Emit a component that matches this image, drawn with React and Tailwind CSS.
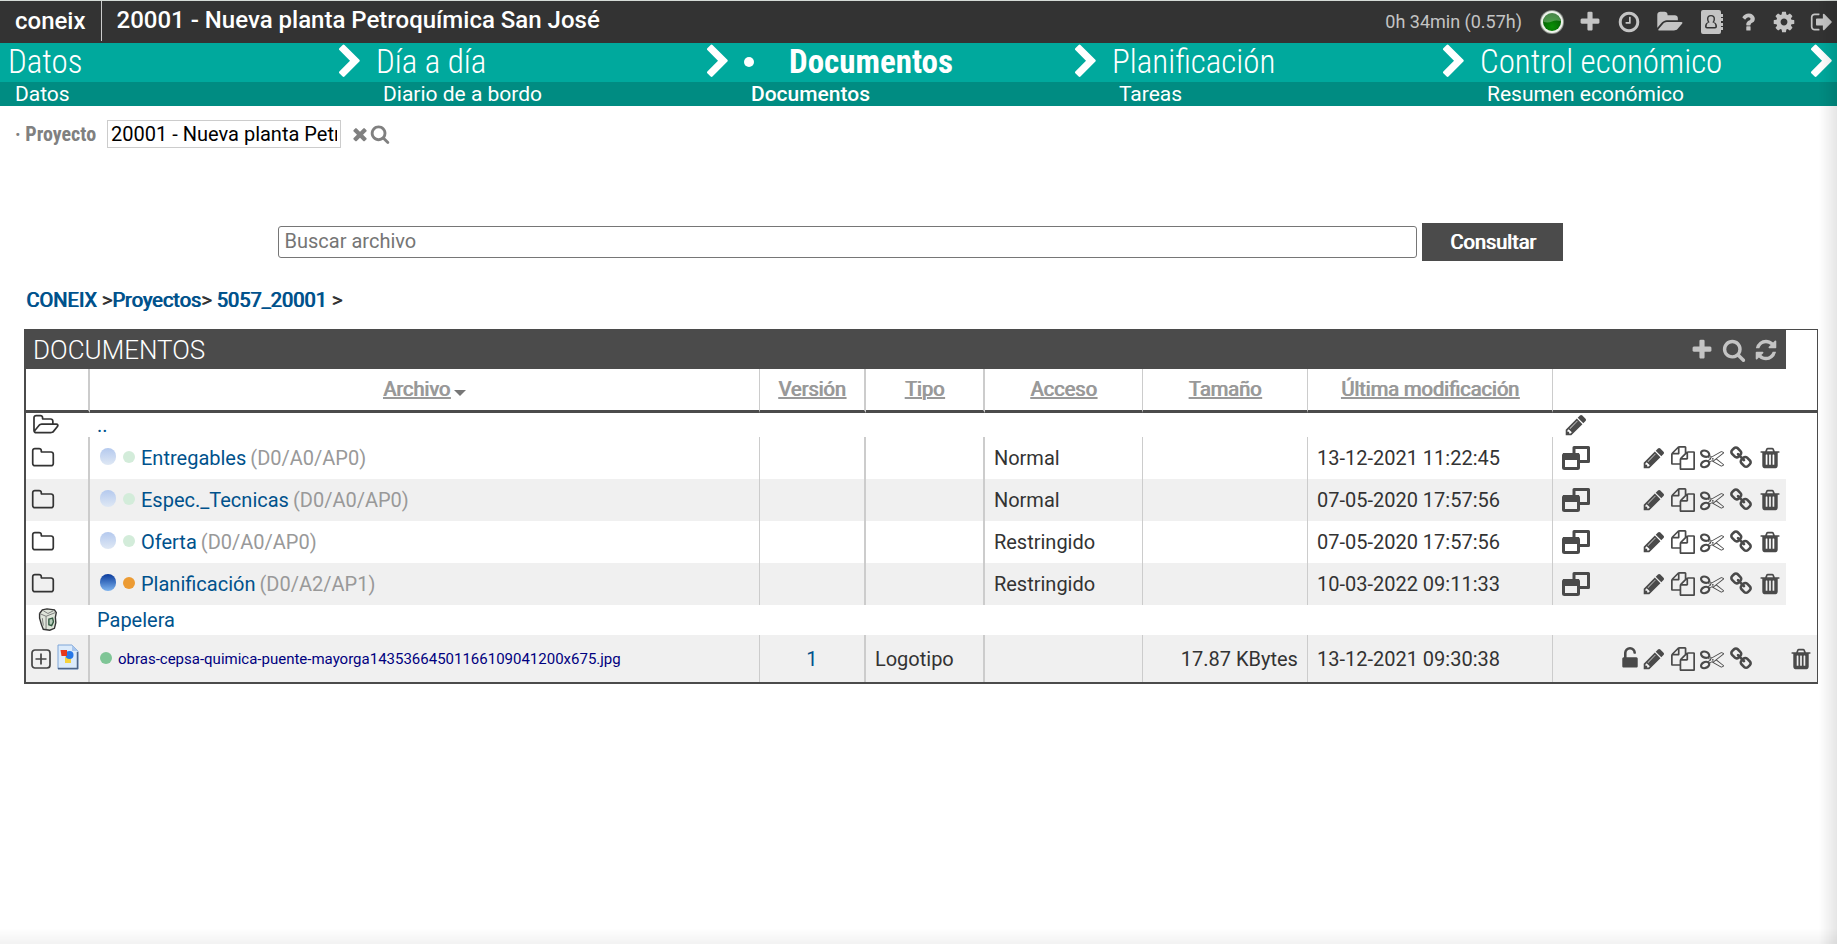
import React from 'react';

const paths = {
    plus: 'M1600 736v192q0 40-28 68t-68 28h-416v416q0 40-28 68t-68 28h-192q-40 0-68-28t-28-68v-416h-416q-40 0-68-28t-28-68v-192q0-40 28-68t68-28h416v-416q0-40 28-68t68-28h192q40 0 68 28t28 68v416h416q40 0 68 28t28 68z',
    search: 'M1216 832q0-185-131.5-316.5t-316.5-131.5-316.5 131.5-131.5 316.5 131.5 316.5 316.5 131.5 316.5-131.5 131.5-316.5zm512 832q0 52-38 90t-90 38q-54 0-90-38l-343-342q-179 124-399 124-143 0-273.5-55.5t-225-150-150-225-55.5-273.5 55.5-273.5 150-225 225-150 273.5-55.5 273.5 55.5 225 150 150 225 55.5 273.5q0 220-124 399l343 343q37 37 37 90z',
    refresh: 'M1639 1056q0 5-1 7-64 268-268 434.5t-478 166.5q-146 0-282.5-55t-243.5-157l-129 129q-19 19-45 19t-45-19-19-45v-448q0-26 19-45t45-19h448q26 0 45 19t19 45-19 45l-137 137q71 66 161 102t187 36q134 0 250-65t186-179q11-17 53-117 8-23 30-23h192q13 0 22.5 9.5t9.5 22.5zm25-800v448q0 26-19 45t-45 19h-448q-26 0-45-19t-19-45 19-45l138-138q-148-137-349-137-134 0-250 65t-186 179q-11 17-53 117-8 23-30 23h-199q-13 0-22.5-9.5t-9.5-22.5v-7q65-268 270-434.5t480-166.5q146 0 284 55.5t245 156.5l130-129q19-19 45-19t45 19 19 45z',
    times: 'M1490 1322q0 40-28 68l-136 136q-28 28-68 28t-68-28l-294-294-294 294q-28 28-68 28t-68-28l-136-136q-28-28-28-68t28-68l294-294-294-294q-28-28-28-68t28-68l136-136q28-28 68-28t68 28l294 294 294-294q28-28 68-28t68 28l136 136q28 28 28 68t-28 68l-294 294 294 294q28 28 28 68z',
    clock: 'M1024 544v448q0 14-9 23t-23 9h-320q-14 0-23-9t-9-23v-64q0-14 9-23t23-9h224v-352q0-14 9-23t23-9h64q14 0 23 9t9 23zm416 352q0-148-73-273t-198-198-273-73-273 73-198 198-73 273 73 273 198 198 273 73 273-73 198-198 73-273zm224 0q0 209-103 385.5t-279.5 279.5-385.5 103-385.5-103-279.5-279.5-103-385.5 103-385.5 279.5-279.5 385.5-103 385.5 103 279.5 279.5 103 385.5z',
    folderOpen: 'M1879 952q0 31-31 66l-336 396q-43 51-120.5 86.5t-143.5 35.5h-1088q-34 0-60.5-13t-26.5-43q0-31 31-66l336-396q43-51 120.5-86.5t143.5-35.5h1088q34 0 60.5 13t26.5 43zm-343-344v160h-832q-94 0-197 47.5t-164 119.5l-337 396-5 6q0-4-.5-12.5t-.5-12.5v-960q0-92 66-158t158-66h320q92 0 158 66t66 158v32h544q92 0 158 66t66 158z',
    folderOpenLine: 'M1845 931q0-35-53-35h-1088q-40 0-85.5 21.5t-71.5 52.5l-294 363q-18 24-18 40 0 35 53 35h1088q40 0 86-22t71-53l294-363q18-22 18-39zm-1141-163h768v-160q0-40-28-68t-68-28h-576q-40 0-68-28t-28-68v-64q0-40-28-68t-68-28h-320q-40 0-68 28t-28 68v853l256-315q44-53 116-87.5t140-34.5zm1269 163q0 62-46 120l-295 363q-43 53-116 87.5t-140 34.5h-1088q-92 0-158-66t-66-158v-960q0-92 66-158t158-66h320q92 0 158 66t66 158v32h544q92 0 158 66t66 158v160h192q54 0 99 24.5t67 70.5q15 32 15 68z',
    folderLine: 'M1600 1312v-704q0-40-28-68t-68-28h-704q-40 0-68-28t-28-68v-64q0-40-28-68t-68-28h-320q-40 0-68 28t-28 68v960q0 40 28 68t68 28h1216q40 0 68-28t28-68zm128-704v704q0 92-66 158t-158 66h-1216q-92 0-158-66t-66-158v-960q0-92 66-158t158-66h320q92 0 158 66t66 158v32h672q92 0 158 66t66 158z',
    question: 'M1088 1256v240q0 16-12 28t-28 12h-240q-16 0-28-12t-12-28v-240q0-16 12-28t28-12h240q16 0 28 12t12 28zm316-600q0 54-15.5 101t-35 76.5-55 59.5-57.5 43.5-61 35.5q-41 23-68.5 65t-27.5 67q0 17-12 32.5t-28 15.5h-240q-15 0-25.5-18.5t-10.5-37.5v-45q0-83 65-156.5t143-108.5q59-27 84-56t25-76q0-42-46.5-74t-107.5-32q-65 0-108 29-35 25-107 115-13 16-31 16-12 0-25-8l-164-125q-13-10-15.5-25t5.5-28q160-266 464-266 80 0 161 31t146 83 106 127.5 41 158.5z',
    cog: 'M1152 896q0-106-75-181t-181-75-181 75-75 181 75 181 181 75 181-75 75-181zm512-109v222q0 12-8 23t-20 13l-185 28q-19 54-39 91 35 50 107 138 10 12 10 25t-9 23q-27 37-99 108t-94 71q-12 0-26-9l-138-108q-44 23-91 38-16 136-29 186-7 28-36 28h-222q-14 0-24.5-8.5t-11.5-21.5l-28-184q-49-16-90-37l-141 107q-10 9-25 9-14 0-25-11-126-114-165-168-7-10-7-23 0-12 8-23 15-21 51-66.5t54-70.5q-27-50-41-99l-183-27q-13-2-21-12.5t-8-23.5v-222q0-12 8-23t19-13l186-28q14-46 39-92-40-57-107-138-10-12-10-24 0-10 9-23 26-36 98.5-107.5t94.5-71.5q13 0 26 10l138 107q44-23 91-38 16-136 29-186 7-28 36-28h222q14 0 24.5 8.5t11.5 21.5l28 184q49 16 90 37l142-107q9-9 24-9 13 0 25 10 129 119 165 170 7 8 7 22 0 12-8 23-15 21-51 66.5t-54 70.5q26 50 41 98l183 28q13 2 21 12.5t8 23.5z',
    signOut: 'M704 1440q0 4 1 20t.5 26.5-3 23.5-10 19.5-20.5 6.5h-320q-119 0-203.5-84.5t-84.5-203.5v-704q0-119 84.5-203.5t203.5-84.5h320q13 0 22.5 9.5t9.5 22.5q0 4 1 20t.5 26.5-3 23.5-10 19.5-20.5 6.5h-320q-66 0-113 47t-47 113v704q0 66 47 113t113 47h312l11.5 1 11.5 3 8 5.5 7 9 2 13.5zm928-544q0 26-19 45l-544 544q-19 19-45 19t-45-19-19-45v-288h-448q-26 0-45-19t-19-45v-384q0-26 19-45t45-19h448v-288q0-26 19-45t45-19 45 19l544 544q19 19 19 45z',
    pencil: 'M491 1536l91-91-235-235-91 91v107h128v128h107zm523-928q0-22-22-22-10 0-17 7l-542 542q-7 7-7 17 0 22 22 22 10 0 17-7l542-542q7-7 7-17zm-54-192l416 416-832 832h-416v-416zm683 96q0 53-37 90l-166 166-416-416 166-165q36-38 90-38 53 0 91 38l235 234q37 39 37 91z',
    files: 'M1696 384q40 0 68 28t28 68v1216q0 40-28 68t-68 28h-960q-40 0-68-28t-28-68v-288h-544q-40 0-68-28t-28-68v-672q0-40 20-88t48-76l408-408q28-28 76-48t88-20h416q40 0 68 28t28 68v328q68-40 128-40h416zm-544 213l-299 299h299v-299zm-640-384l-299 299h299v-299zm196 647l316-316v-416h-384v416q0 40-28 68t-68 28h-416v640h512v-256q0-40 20-88t48-76zm956 804v-1152h-384v416q0 40-28 68t-68 28h-416v640h896z',
    cut: 'M960 896q26 0 45 19t19 45-19 45-45 19-45-19-19-45 19-45 45-19zm300 64l507 398q28 20 25 56-5 35-35 51l-128 64q-13 7-29 7-17 0-31-8l-690-387-110 66q-8 4-12 5 14 49 10 97-7 77-56 147.5t-132 123.5q-132 84-277 84-136 0-222-78-90-84-79-207 7-76 56-147t131-124q132-84 278-84 83 0 151 31 9-13 22-22l122-73-122-73q-13-9-22-22-68 31-151 31-146 0-278-84-82-53-131-124t-56-147q-5-59 15.5-113t63.5-93q85-79 222-79 145 0 277 84 83 52 132 123t56 148q4 48-10 97 4 1 12 5l110 66 690-387q14-8 31-8 16 0 29 7l128 64q30 16 35 51 3 36-25 56zm-681-260q46-42 21-108t-106-117q-92-59-192-59-74 0-113 36-46 42-21 108t106 117q92 59 192 59 74 0 113-36zm-85 745q81-51 106-117t-21-108q-39-36-113-36-100 0-192 59-81 51-106 117t21 108q39 36 113 36 100 0 192-59zm178-613l96 58v-11q0-36 33-56l14-8-79-44-26 26q-3 3-10 11t-12 12q-2 2-4 3.5t-3 2.5zm224 224l96 32 736-576-128-64-768 431v113l-160 96 9 8q2 2 7 6 4 4 11 12t11 12l26 26zm704 416l128-64-520-408-177 138q-2 3-13 7z',
    link: 'M1520 1216q0-40-28-68l-208-208q-28-28-68-28-42 0-72 32 3 3 19 18.5t21.5 21.5 15 19 13 25.5 3.5 27.5q0 40-28 68t-68 28q-15 0-27.5-3.5t-25.5-13-19-15-21.5-21.5-18.5-19q-33 31-33 73 0 40 28 68l206 207q27 27 68 27 40 0 68-26l147-146q28-28 28-67zm-703-705q0-40-28-68l-206-207q-28-28-68-28-39 0-68 27l-147 146q-28 28-28 67 0 40 28 68l208 208q27 27 68 27 42 0 72-31-3-3-19-18.5t-21.5-21.5-15-19-13-25.5-3.5-27.5q0-40 28-68t68-28q15 0 27.5 3.5t25.5 13 19 15 21.5 21.5 18.5 19q33-31 33-73zm895 705q0 120-85 203l-147 146q-83 83-203 83-121 0-204-85l-206-207q-83-83-83-203 0-123 88-209l-88-88q-86 88-208 88-120 0-204-84l-208-208q-84-84-84-204t85-203l147-146q83-83 203-83 121 0 204 85l206 207q83 83 83 203 0 123-88 209l88 88q86-88 208-88 120 0 204 84l208 208q84 84 84 204z',
    trash: 'M704 1376v-704q0-14-9-23t-23-9h-64q-14 0-23 9t-9 23v704q0 14 9 23t23 9h64q14 0 23-9t9-23zm256 0v-704q0-14-9-23t-23-9h-64q-14 0-23 9t-9 23v704q0 14 9 23t23 9h64q14 0 23-9t9-23zm256 0v-704q0-14-9-23t-23-9h-64q-14 0-23 9t-9 23v704q0 14 9 23t23 9h64q14 0 23-9t9-23zm-544-992h448l-48-117q-7-9-17-11h-317q-10 2-17 11zm928 32v64q0 14-9 23t-23 9h-96v948q0 83-47 143.5t-113 60.5h-832q-66 0-113-58.5t-47-141.5v-952h-96q-14 0-23-9t-9-23v-64q0-14 9-23t23-9h309l70-167q15-37 54-63t79-26h320q40 0 79 26t54 63l70 167h309q14 0 23 9t9 23z',
    unlock: 'M1376 768q40 0 68 28t28 68v576q0 40-28 68t-68 28h-960q-40 0-68-28t-28-68v-576q0-40 28-68t68-28h32v-320q0-185 131.5-316.5t316.5-131.5 316.5 131.5 131.5 316.5q0 26-19 45t-45 19h-64q-26 0-45-19t-19-45q0-106-75-181t-181-75-181 75-75 181v320h736z',
    chevron: 'M1363 877l-742 742q-19 19-45 19t-45-19l-166-166q-19-19-19-45t19-45l531-531-531-531q-19-19-19-45t19-45l166-166q19-19 45-19t45 19l742 742q19 19 19 45t-19 45z',
};

const Icon = ({ name, className = 'size-6', wide = false }) => (
    <svg viewBox={wide ? '0 0 2048 1792' : '0 0 1792 1792'} className={`shrink-0 ${className}`} fill="currentColor" aria-hidden="true">
        <path d={paths[name]} />
    </svg>
);

const IconButton = ({ label, children, className = '' }) => (
    <button type="button" aria-label={label} className={`flex shrink-0 cursor-pointer items-center ${className}`}>
        {children}
    </button>
);

const Led = () => (
    <svg viewBox="0 0 24 26" className="h-[26px] w-6" aria-hidden="true">
        <defs>
            <radialGradient id="led" cx="50%" cy="75%" r="70%">
                <stop offset="0" stopColor="#0a8f06" />
                <stop offset="1" stopColor="#045a04" />
            </radialGradient>
        </defs>
        <circle cx="12" cy="13" r="12" fill="#8d928b" />
        <circle cx="12" cy="13" r="11" fill="#edf2ea" />
        <circle cx="12" cy="13" r="9" fill="url(#led)" />
        <path d="M3.500 13a8.500 8.500 0 0 1 17-1q-5-1-8.500.5T3.500 13z" fill="#fff" opacity=".28" />
    </svg>
);

const AddressBook = () => (
    <svg viewBox="0 0 24 28" className="h-7 w-6" fill="currentColor" aria-hidden="true">
        <path fillRule="evenodd" d="M3 2h16a2 2 0 0 1 2 2v20a2 2 0 0 1-2 2H3a2 2 0 0 1-2-2V4a2 2 0 0 1 2-2zm8 5a4 4 0 0 0-4 4q0 2 1 3.300-3 .7-3 4.200 0 2 2 2h8q2 0 2-2 0-3.500-3-4.200 1-1.300 1-3.300a4 4 0 0 0-4-4z" />
        <path d="M11 8.300a2.600 2.600 0 0 1 2.600 2.700q0 2.200-1.300 3.200 3 .5 3 3.500v1.200H6.700v-1.200q0-3 3-3.500Q8.400 13.200 8.400 11A2.600 2.600 0 0 1 11 8.300z" />
        <path d="M21 6h2v3h-2zM21 10h2v3h-2zM21 15h2v3h-2zM21 19h2v3h-2z" />
    </svg>
);

const WindowRestore = () => (
    <svg viewBox="0 0 28 24" className="h-6 w-7" fill="none" stroke="currentColor" aria-hidden="true">
        <path d="M12 7.500v-6h14.500v14H18" strokeWidth="3" strokeLinejoin="round" />
        <rect x="1.500" y="8.500" width="15" height="14" rx="1" strokeWidth="3" />
        <path d="M1 10.500h16" strokeWidth="7" />
    </svg>
);

const Recycle = () => (
    <svg viewBox="0 0 24 28" className="h-[26px] w-6" aria-hidden="true">
        <path d="M4 7l3-4 5-1 8 1 2 3-1 5 .5 6-1.500 6-5 2-7-1-2-5-2-7z" fill="#dfe5da" stroke="#333" strokeWidth="1.500" />
        <path d="M4 7l7 3 10-4M11 10v14M8 4l5 3 6-3M7 12l1 8" fill="none" stroke="#777" />
        <path d="M14 13l4-1 1 4-2 4-3-1z" fill="#b7cdbb" stroke="#345b42" strokeWidth="1.500" />
    </svg>
);

const PictureFile = () => (
    <svg viewBox="0 0 22 26" className="h-[26px] w-[22px]" aria-hidden="true">
        <path d="M1 1h14l6 6v18H1z" fill="#dcebfb" stroke="#7fa6d8" />
        <path d="M20.500 8v16.500H1" fill="none" stroke="#4f6688" strokeWidth="1.500" />
        <path d="M15 1l6 6h-6z" fill="#a9c6ec" />
        <path d="M8 13l6 1v5H8z" fill="#f6d23c" />
        <circle cx="12.500" cy="11" r="4" fill="#2677e8" />
        <path d="M3.500 6H10v6H4.500z" fill="#e8361a" />
    </svg>
);

const menu = [
    { title: 'Datos', sub: 'Datos' },
    { title: 'Día a día', sub: 'Diario de a bordo' },
    { title: 'Documentos', sub: 'Documentos', active: true },
    { title: 'Planificación', sub: 'Tareas' },
    { title: 'Control económico', sub: 'Resumen económico' },
];

const columns = [
    { title: 'Versión', border: 'border-r-2' },
    { title: 'Tipo', border: 'border-r-2' },
    { title: 'Acceso', border: 'border-r' },
    { title: 'Tamaño', border: 'border-r' },
    { title: 'Última modificación', border: 'border-r' },
];

const folders = [
    { name: 'Entregables', info: '(D0/A0/AP0)', access: 'Normal', date: '13-12-2021 11:22:45' },
    { name: 'Espec._Tecnicas', info: '(D0/A0/AP0)', access: 'Normal', date: '07-05-2020 17:57:56' },
    { name: 'Oferta', info: '(D0/A0/AP0)', access: 'Restringido', date: '07-05-2020 17:57:56' },
    { name: 'Planificación', info: '(D0/A2/AP1)', access: 'Restringido', date: '10-03-2022 09:11:33', pending: true },
];

// regular weight thickened by one pixel
const heavy = '[text-shadow:1px_0_currentColor]';

const Header = () => (
    <header className="flex h-[43px] items-center border-t border-[#d5dbd7] bg-[#333] pr-[3px] text-white">
        <a href="#inicio" className="flex h-10 items-center self-start border-r border-[#ccc] pr-[15px] pl-[15px] text-[24px] leading-10 font-medium">coneix</a>
        <h1 className="self-start pl-[15px] text-[24px] leading-[38px] font-medium">20001 - Nueva planta Petroquímica San José</h1>
        <div className="ml-auto flex items-center text-[#c4c4c4]">
            <span className="mr-[18px] pb-[2px] text-[18px]">0h 34min (0.57h)</span>
            <IconButton label="Estado" className="mr-[14px]"><Led /></IconButton>
            <IconButton label="Añadir" className="mr-[15px]"><Icon name="plus" /></IconButton>
            <IconButton label="Horas" className="mr-4"><Icon name="clock" /></IconButton>
            <IconButton label="Carpetas" className="mr-[15px]"><Icon name="folderOpen" className="h-6 w-7" wide /></IconButton>
            <IconButton label="Contactos" className="mr-3"><AddressBook /></IconButton>
            <IconButton label="Ayuda" className="mr-3"><Icon name="question" /></IconButton>
            <IconButton label="Ajustes" className="mr-[14px]"><Icon name="cog" /></IconButton>
            <IconButton label="Salir"><Icon name="signOut" /></IconButton>
        </div>
    </header>
);

const Menu = () => (
    <nav className="-mr-[3px] grid grid-cols-5 font-['Roboto_Condensed',Roboto,sans-serif] text-white">
        {menu.map(item => (
            <div key={item.title} className="min-w-0">
                <div className="flex h-[39px] items-center justify-between bg-[#00a99d] pb-[2px] pl-2">
                    <a href="#menu" className={item.active ? 'flex items-center text-[33px] leading-9 font-bold' : 'text-[33px] leading-9 font-light'}>
                        {item.active && <span className="mr-[35px] size-[10px] rounded-full bg-white" />}
                        {item.title}
                    </a>
                    <Icon name="chevron" className="size-9" />
                </div>
                <div className="h-6 bg-[#008c82] pl-[15px] font-[Roboto,sans-serif] text-[21px] leading-6">
                    <a href="#submenu" className={item.active ? 'font-medium' : ''}>{item.sub}</a>
                </div>
            </div>
        ))}
    </nav>
);

const RowActions = () => (
    <>
        <IconButton label="Editar"><Icon name="pencil" /></IconButton>
        <IconButton label="Copiar"><Icon name="files" /></IconButton>
        <IconButton label="Cortar"><Icon name="cut" /></IconButton>
        <IconButton label="Enlace"><Icon name="link" /></IconButton>
    </>
);

const FolderRow = ({ folder, shaded }) => {
    const shade = shaded ? 'bg-[#f0f0f0]' : '';
    const cell = `border-r border-[#ccc] px-[9px] ${shade}`;
    return (
        <tr className="h-[42px]">
            <td className={`border-r-2 border-[#ccc] pl-[5px] ${shade}`}>
                <Icon name="folderLine" />
            </td>
            <td className={`border-r border-[#ccc] px-[10px] ${shade}`}>
                <div className="flex items-center">
                    <span className={`mr-[7px] mb-1 h-[17px] w-4 rounded-full bg-linear-to-b ${folder.pending ? 'from-[#0a3a9c] to-[#7fb4ee]' : 'from-[#b4c9ee] to-[#dfe8f4]'}`} />
                    <span className={`mr-[6px] mb-[2px] size-3 rounded-full ${folder.pending ? 'bg-[#ec9b33]' : 'bg-[#d3ecda]'}`} />
                    <a href="#carpeta" className="mr-1 text-[#00528c]">{folder.name}</a>
                    <span className="text-[#999]">{folder.info}</span>
                </div>
            </td>
            <td className={`border-r-2 border-[#ccc] ${shade}`} />
            <td className={`border-r-2 border-[#ccc] ${shade}`} />
            <td className={cell}>{folder.access}</td>
            <td className={cell} />
            <td className={cell}>{folder.date}</td>
            <td className={`pr-1 pl-[9px] text-[#4a4a4a] ${shade}`}>
                <div className="flex items-center gap-[5px]">
                    <IconButton label="Abrir ventana" className="mr-auto"><WindowRestore /></IconButton>
                    <RowActions />
                    <IconButton label="Eliminar"><Icon name="trash" /></IconButton>
                </div>
            </td>
            <td />
        </tr>
    );
};

const DocumentsTable = () => (
    <table className="w-full table-fixed border-separate border-spacing-0 border-t border-r border-b-2 border-l-2 border-[#4b4b4b] text-left text-[20px] leading-6 text-[#333]">
        <colgroup>
            <col className="w-16" />
            <col />
            <col className="w-[106px]" />
            <col className="w-[119px]" />
            <col className="w-[158px]" />
            <col className="w-[165px]" />
            <col className="w-[245px]" />
            <col className="w-[233px]" />
            <col className="w-[31px]" />
        </colgroup>
        <thead>
            <tr className="h-[39px] bg-[#4b4b4b]">
                <th colSpan={8} className="pr-2 pl-[7px] font-light text-white">
                    <div className="flex items-center">
                        <h2 className="mr-auto text-[26px] leading-8">DOCUMENTOS</h2>
                        <div className="flex gap-2 text-[#c4c4c4]">
                            <IconButton label="Nuevo documento"><Icon name="plus" /></IconButton>
                            <IconButton label="Buscar"><Icon name="search" /></IconButton>
                            <IconButton label="Actualizar"><Icon name="refresh" /></IconButton>
                        </div>
                    </div>
                </th>
                <td className="bg-white" />
            </tr>
            <tr className="h-11 text-[#999]">
                <td className="border-r-2 border-b-3 border-r-[#ccc] border-b-[#4b4b4b]" />
                <th className={`border-r border-b-3 border-r-[#ccc] border-b-[#4b4b4b] pb-[2px] text-center font-normal ${heavy}`}>
                    <a href="#orden" className="underline">Archivo</a>
                    <span className="ml-1 inline-block border-x-6 border-t-6 border-x-transparent border-t-[#777]" />
                </th>
                {columns.map(column => (
                    <th key={column.title} className={`${column.border} border-b-3 border-r-[#ccc] border-b-[#4b4b4b] pb-[2px] text-center font-normal ${heavy}`}>
                        <a href="#orden" className="underline">{column.title}</a>
                    </th>
                ))}
                <td colSpan={2} className="border-b-3 border-b-[#4b4b4b]" />
            </tr>
        </thead>
        <tbody>
            <tr className="h-6">
                <td className="pl-[6px]"><Icon name="folderOpenLine" className="h-6 w-7" wide /></td>
                <td colSpan={6} className="pl-[7px]"><a href="#subir" className="text-[#00528c]">..</a></td>
                <td colSpan={2} className="pl-[11px] text-[#4a4a4a]">
                    <IconButton label="Editar carpeta"><Icon name="pencil" /></IconButton>
                </td>
            </tr>
            {folders.map((folder, index) => (
                <FolderRow key={folder.name} folder={folder} shaded={index % 2 === 1} />
            ))}
            <tr className="h-[30px]">
                <td className="pl-[9px]"><Recycle /></td>
                <td colSpan={8} className="pl-[7px]"><a href="#papelera" className="text-[#00528c]">Papelera</a></td>
            </tr>
            <tr className="h-[47px] bg-[#f0f0f0]">
                <td className="border-r-2 border-[#ccc] pl-[5px]">
                    <div className="flex items-center gap-[6px]">
                        <IconButton label="Desplegar">
                            <svg viewBox="0 0 20 20" className="size-5" fill="none" stroke="#444" strokeWidth="1.700" aria-hidden="true">
                                <rect x="1" y="1" width="18" height="18" rx="3" />
                                <path d="M4.500 10h11M10 4.500v11" />
                            </svg>
                        </IconButton>
                        <div className="pb-1"><PictureFile /></div>
                    </div>
                </td>
                <td className="border-r border-[#ccc] px-[10px]">
                    <div className="flex items-center">
                        <span className="mr-[6px] mb-[2px] size-3 rounded-full bg-[#7fc596]" />
                        <a href="#archivo" className="text-[15px] text-[#00007f]">obras-cepsa-quimica-puente-mayorga14353664501166109041200x675.jpg</a>
                    </div>
                </td>
                <td className="border-r-2 border-[#ccc] text-center"><a href="#version" className="text-[#00528c]">1</a></td>
                <td className="border-r-2 border-[#ccc] px-[9px]">Logotipo</td>
                <td className="border-r border-[#ccc]" />
                <td className="border-r border-[#ccc] px-[9px] text-right">17.87 KBytes</td>
                <td className="border-r border-[#ccc] px-[9px]">13-12-2021 09:30:38</td>
                <td className="pr-[33px] text-[#4a4a4a]">
                    <div className="flex items-center justify-end">
                        <IconButton label="Desbloquear"><Icon name="unlock" /></IconButton>
                        <div className="flex gap-[5px]"><RowActions /></div>
                    </div>
                </td>
                <td className="pl-[3px] text-[#4a4a4a]">
                    <IconButton label="Eliminar"><Icon name="trash" /></IconButton>
                </td>
            </tr>
        </tbody>
    </table>
);

const App = () => (
    <div className="min-h-screen overflow-hidden bg-white font-[Roboto,sans-serif] text-[#333]">
        <Header />
        <Menu />
        <main>
            <form className="flex items-center pt-[14px] pl-[15px]">
                <label htmlFor="proyecto" className="mr-[11px] font-['Roboto_Condensed',Roboto,sans-serif] text-[20px] leading-7 font-bold text-[#808080]">· Proyecto</label>
                <input id="proyecto" defaultValue="20001 - Nueva planta Petroquímica San José" className="mr-[9px] h-7 w-[234px] border border-[#ccc] px-[3px] text-[20px] text-black" />
                <div className="flex items-center text-[#808080]">
                    <IconButton label="Quitar proyecto"><Icon name="times" className="size-5" /></IconButton>
                    <IconButton label="Buscar proyecto"><Icon name="search" className="size-5" /></IconButton>
                </div>
            </form>
            <form className="mt-[75px] ml-[calc(15%+2px)] flex w-[70%] items-center gap-[5px]">
                <input type="search" aria-label="Buscar archivo" placeholder="Buscar archivo" className="h-8 min-w-0 grow rounded-[3px] border border-[#767676] px-[6px] pb-[2px] text-[20px] placeholder:text-[#757575]" />
                <button type="button" className={`h-[38px] w-[141px] bg-[#4b4b4b] text-[20px] text-white ${heavy}`}>Consultar</button>
            </form>
            <p className={`mt-[25px] pl-[26px] text-[20px] leading-7 ${heavy}`}>
                <a href="#coneix" className="text-[#00528c]">CONEIX</a> &gt;<a href="#proyectos" className="text-[#00528c]">Proyectos</a>&gt; <a href="#actual" className="text-[#00528c]">5057_20001</a> &gt;
            </p>
            <div className="mt-[15px] mr-[19px] ml-6">
                <DocumentsTable />
            </div>
        </main>
        <div className="pointer-events-none fixed inset-y-0 right-0 w-[18px] bg-linear-to-r from-transparent to-black/10" />
        <div className="pointer-events-none fixed inset-x-0 bottom-0 h-4 bg-linear-to-b from-transparent to-black/5" />
    </div>
);

export default App;
